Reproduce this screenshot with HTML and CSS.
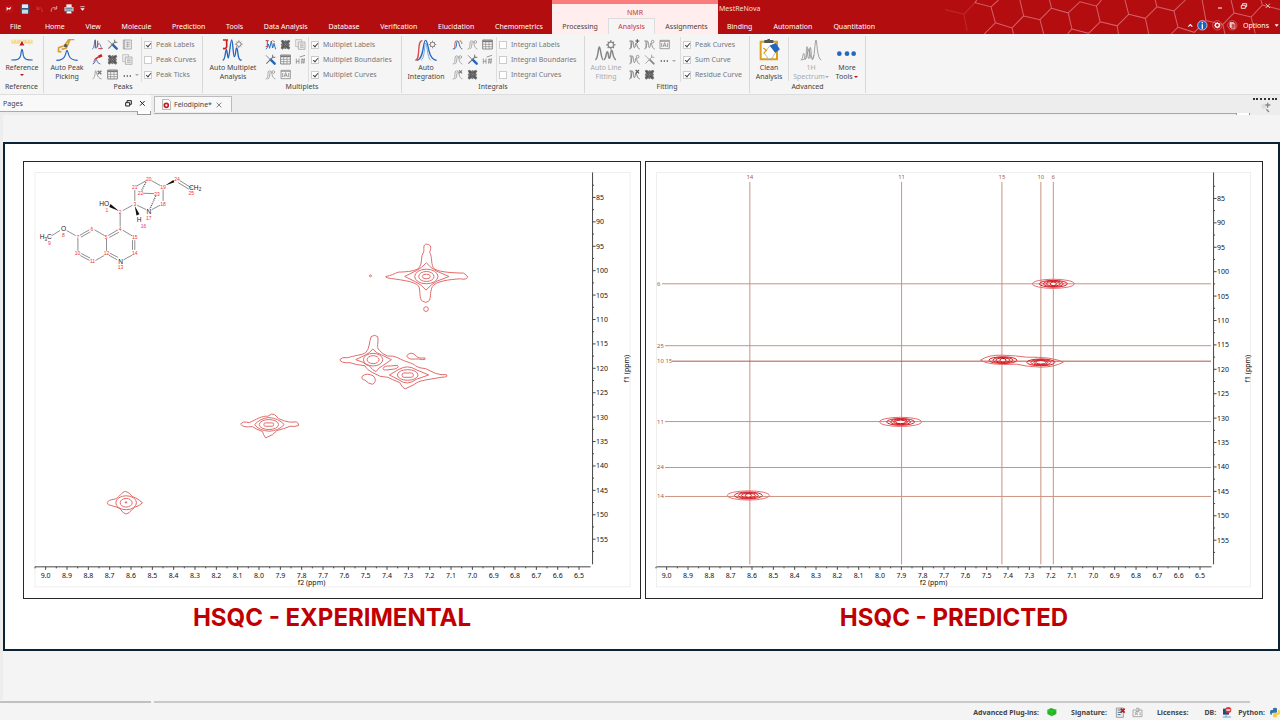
FILE: index.html
```html
<!DOCTYPE html>
<html lang="en">
<head>
<meta charset="utf-8">
<title>MestReNova</title>
<link rel="stylesheet" href="styles.css">
</head>
<body>
<svg class="defs" width="0" height="0" aria-hidden="true">
  <symbol id="tools" viewBox="0 0 33 33"><path d="M3 4L15 16" stroke="#8a8a8a" stroke-width="3"/><path d="M17 17L29 29" stroke="#1f66c1" stroke-width="7" stroke-linecap="round"/><path d="M4 29L25 8" stroke="#777" stroke-width="3.5"/><path d="M23 2v8h8" stroke="#777" stroke-width="3" fill="none"/></symbol>
  <symbol id="tools-off" viewBox="0 0 33 33"><path d="M3 4L15 16" stroke="#aaa" stroke-width="3"/><path d="M17 17L29 29" stroke="#8c8c8c" stroke-width="6" stroke-linecap="round"/><path d="M4 29L25 8" stroke="#aaa" stroke-width="3"/><path d="M23 2v8h8" stroke="#aaa" stroke-width="3" fill="none"/></symbol>
  <symbol id="splat" viewBox="0 0 33 33"><path d="M2 5l6-3 5 4 4-3 4 3 6-4 4 5-4 6 3 4-3 4 4 6-5 5-6-4-4 3-4-3-5 4-5-5 3-6-3-4 4-5z" fill="#737373"/><path d="M6 6L26 27M26 6L6 27" stroke="#5a5a5a" stroke-width="6"/><path d="M13 13l7 7M20 13l-7 7" stroke="#999" stroke-width="2"/></symbol>
  <symbol id="report" viewBox="0 0 33 33"><path d="M4 3h24v27H4zM8 3v27" fill="#f2f2f2" stroke="#999" stroke-width="2.4"/><path d="M12 10h12M12 16h12M12 22h12M17 8v18" stroke="#999" stroke-width="2"/></symbol>
  <symbol id="copy" viewBox="0 0 33 33"><path d="M2 2h18v21H2z" fill="#f0f0f0" stroke="#aaa" stroke-width="2"/><path d="M10 9h20v22H10z" fill="#eee" stroke="#999" stroke-width="2"/><path d="M15 15h11M15 20h11M15 25h11" stroke="#999" stroke-width="2"/></symbol>
  <symbol id="table" viewBox="0 0 33 33"><path d="M2 3h29v27H2z" fill="#f8f8f8" stroke="#777" stroke-width="2.6"/><path d="M2 7h29" stroke="#777" stroke-width="5"/><path d="M2 16h29M2 23h29M11 4v26M21 4v26" stroke="#888" stroke-width="2"/></symbol>
  <symbol id="dots" viewBox="0 0 33 33"><path d="M5 21h4M14 21h4M23 21h4" stroke="#555" stroke-width="4"/></symbol>
  <symbol id="pk1" viewBox="0 0 33 33" fill="none"><path d="M1 30c7-2 6-26 8-26s1 24 6 24" stroke="#2467b8" stroke-width="2.6"/><path d="M10 2v26M17 5v20M17 17l5-4" stroke="#c33" stroke-width="3"/><path d="M23 14l5 12 4 3" stroke="#3576c4" stroke-width="2.4"/><path d="M19 29h12" stroke="#c33" stroke-width="3"/></symbol>
  <symbol id="pk2" viewBox="0 0 33 33" fill="none"><path d="M2 30c8-1 7-14 10-14s3 13 13 14" stroke="#2467b8" stroke-width="2.6"/><path d="M10 15L21 8" stroke="#c33" stroke-width="5"/><path d="M20 8l10-4" stroke="#c22" stroke-width="8"/><path d="M5 25l4-12" stroke="#d66" stroke-width="3"/></symbol>
  <symbol id="pk3" viewBox="0 0 33 33" fill="none"><path d="M2 30c8-1 7-25 9-25s3 23 18 25" stroke="#999" stroke-width="2.6"/><path d="M17 5l11 11M28 5L17 16" stroke="#777" stroke-width="4"/></symbol>
  <symbol id="mu" viewBox="0 0 33 33" fill="none"><path d="M2 5h9M7 5v14q-1 5-5 4" stroke="#c33" stroke-width="3"/><path d="M3 31q5-4 7-16l4 13 5-22 4 21 4-14 5 18" stroke="#2467b8" stroke-width="2.8"/><path d="M22 4l8 5" stroke="#d66" stroke-width="3"/></symbol>
  <symbol id="sint" viewBox="0 0 33 33" fill="none"><path d="M2 30c12 0 2-25 12-25M8 30c9-1 5-24 9-24s3 22 14 24" stroke="#999" stroke-width="2.5"/><circle cx="25" cy="9" r="4" stroke="#999" stroke-width="2.5"/></symbol>
  <symbol id="sintx" viewBox="0 0 33 33" fill="none"><path d="M2 30c12 0 2-25 12-25M8 30c9-1 5-24 9-24s3 22 14 24" stroke="#999" stroke-width="2.5"/><path d="M21 4l9 9M30 4l-9 9" stroke="#777" stroke-width="3.5"/></symbol>
  <symbol id="sinta" viewBox="0 0 33 33" fill="none"><path d="M2 30c12 0 2-25 12-25" stroke="#d43a3a" stroke-width="2.6"/><path d="M6 30c10-1 6-24 11-24s4 22 14 24" stroke="#2467b8" stroke-width="3"/><path d="M23 4l6 6v5" stroke="#e29b62" stroke-width="4"/></symbol>
  <symbol id="fit" viewBox="0 0 33 33" fill="none"><path d="M1 6h9M6 6v22M1 30c9-1 6-23 10-23s1 19 5 19 2-14 5-14 2 16 11 18" stroke="#777" stroke-width="2.8"/><path d="M19 6h12M25 1v11" stroke="#555" stroke-width="3.6"/></symbol>
  <symbol id="fito" viewBox="0 0 33 33" fill="none"><path d="M1 6h9M6 6v22M1 30c9-1 6-23 10-23s1 19 5 19 2-14 5-14 2 16 11 18" stroke="#8c8c8c" stroke-width="2.8"/><circle cx="26" cy="8" r="4" stroke="#999" stroke-width="3"/></symbol>
  <symbol id="fitx" viewBox="0 0 33 33" fill="none"><path d="M1 6h9M6 6v22M1 30c9-1 6-23 10-23s1 19 5 19 2-14 5-14 2 16 11 18" stroke="#777" stroke-width="2.8"/><path d="M20 3l10 10M30 3L20 13" stroke="#555" stroke-width="3.6"/></symbol>
  <symbol id="hash" viewBox="0 0 33 33" fill="none" stroke="#999" stroke-width="3"><path d="M4 14v15M12 14v15M4 22h8M18 17h12M18 24h12M22 13l-2 16M28 13l-2 16M14 9L30 4"/></symbol>
  <symbol id="abox" viewBox="0 0 33 33" fill="none" stroke="#888" stroke-width="2.4"><path d="M3 4h28v25H3zM3 7h28M12 24l5-13 5 13M14 20h6M8 12v12M26 12v12"/></symbol>
  <symbol id="gear" viewBox="0 0 26 26" fill="none"><circle cx="13" cy="13" r="7" stroke="#858585" stroke-width="3"/><path d="M13 1v5M13 20v5M1 13h5M20 13h5M5 5l3 3M18 18l3 3M21 5l-3 3M8 18l-3 3" stroke="#858585" stroke-width="3"/></symbol>
</svg>

<header class="titlebar">
  <div class="side side-left">
    <div class="quick">
      <svg width="10" height="10" viewBox="0 0 30 30" aria-label="MestReNova"><rect x="2" y="3" width="26" height="24" rx="6" fill="#c01016"/><path d="M8 22V9l6 4 8-5-4 9-6-2z" fill="#fff"/></svg>
      <button aria-label="Save"><svg width="10" height="10" viewBox="0 0 30 30"><path d="M2 2h26v26H2z" fill="#2d5f86"/><path d="M6 1h18v11H6z" fill="#dceaf2"/><path d="M6 17h18v12H6z" fill="#c8dbe6"/></svg></button>
      <button aria-label="Undo"><svg width="8" height="8" viewBox="0 0 24 24"><path d="M3 4v9h8M4 12c7-7 16-4 14 9" fill="none" stroke="#dd3438" stroke-width="3"/></svg></button>
      <button aria-label="Redo"><svg width="8" height="8" viewBox="0 0 24 24"><path d="M20 3v9h-9M20 11C11 4 2 8 4 20" fill="none" stroke="#d8a09e" stroke-width="3"/></svg></button>
      <button aria-label="Print"><svg width="10" height="10" viewBox="0 0 30 30"><path d="M7 1h16v9H7z" fill="#e9eef2"/><path d="M1 9h28v13H1z" fill="#b5bac1"/><path d="M5 14h20M7 21h16v8H7z" fill="#fff" stroke="#435c79" stroke-width="2"/></svg></button>
      <button aria-label="Customize"><svg width="5" height="5" viewBox="0 0 15 15"><path d="M1 2h13" stroke="#fff" stroke-width="2"/><path d="M1 7h13l-6 7z" fill="#fff"/></svg></button>
    </div>
    <nav class="tabs">
      <button class="file">File</button><button>Home</button><button>View</button><button>Molecule</button><button>Prediction</button><button>Tools</button><button>Data Analysis</button><button>Database</button><button>Verification</button><button>Elucidation</button><button>Chemometrics</button>
    </nav>
  </div>
  <div class="context">
    <div class="context-name">NMR</div>
    <nav class="tabs"><button>Processing</button><button class="active">Analysis</button><button class="last">Assignments</button></nav>
  </div>
  <div class="side side-right">
    <svg class="hexes" viewBox="440 0 1000 100" fill="none" stroke="#d3616a" stroke-width="3" aria-hidden="true">
      <path d="M455 28L510 42M543 8L510 42L520 90" opacity=".35"/>
      <path d="M548 0L543 8L590 20L603 67L570 100M590 20L612 0M603 67L652 82L686 47L675 0M652 82L656 100M686 47L734 58L768 24L762 0M734 58L745 100M768 24L817 38L828 85L815 100M828 85L877 98L911 64L900 18L852 5L817 38M900 18L915 0M911 64L961 76L995 42L984 0M961 76L965 100M995 42L1044 54L1078 20L1073 0M1044 54L1054 100M1078 20L1128 32L1140 80L1120 100M1128 32L1162 0M1140 80L1188 95L1222 60L1211 0M1222 60L1272 72L1305 38L1296 0M1272 72L1278 100M1305 38L1355 50L1388 15L1384 0M1355 50L1367 98M1388 15L1440 28"/>
    </svg>
    <div class="title-row">
      <span class="app-name">MestReNova</span>
      <div class="window-buttons">
        <button aria-label="Minimize"><svg width="8" height="8" viewBox="0 0 24 24"><path d="M6 18h12" stroke="#fff" stroke-width="3"/></svg></button>
        <button aria-label="Restore"><svg width="8" height="8" viewBox="0 0 24 24"><path d="M4 10h12v9H4zM8 10V5h12v9h-4" fill="none" stroke="#fff" stroke-width="2.5"/></svg></button>
        <button aria-label="Close"><svg width="8" height="8" viewBox="0 0 24 24"><path d="M5 5l13 13M18 5L5 18" stroke="#fff" stroke-width="2"/></svg></button>
      </div>
    </div>
    <div class="right-row">
      <nav class="tabs"><button>Binding</button><button>Automation</button><button>Quantitation</button></nav>
      <div class="options">
        <button aria-label="Collapse ribbon"><svg width="5" height="5" viewBox="0 0 15 15"><path d="M1 11l6-6 6 6" fill="none" stroke="#fff" stroke-width="3.5"/></svg></button>
        <button aria-label="Information"><svg width="11" height="11" viewBox="0 0 33 33"><circle cx="16" cy="16" r="14" fill="#1765c0" stroke="#c9d9ef" stroke-width="2.5"/><path d="M16 13v13M16 6v4" stroke="#fff" stroke-width="4"/></svg></button>
        <button aria-label="Settings"><svg width="11" height="11" viewBox="0 0 33 33" fill="none"><circle cx="16" cy="16" r="14" stroke="#dc7a7c" stroke-width="2"/><circle cx="16" cy="16" r="6" stroke="#fff" stroke-width="4"/><path d="M16 7v3M16 22v3M7 16h3M22 16h3M10 10l2 2M20 20l2 2M22 10l-2 2M10 22l2-2" stroke="#fff" stroke-width="3"/></svg></button>
        <button aria-label="Layouts"><svg width="11" height="11" viewBox="0 0 33 33" fill="none"><circle cx="16" cy="16" r="14" stroke="#dc7a7c" stroke-width="2"/><path d="M9 8h11v14H9z" fill="#e9b1b2" stroke="#fff" stroke-width="2"/><path d="M13 11h11v14H13z" fill="#c34c50" stroke="#f2cccc" stroke-width="2"/></svg></button>
        <button class="options-label">Options <svg width="5" height="5" viewBox="0 0 15 15"><path d="M2 4h12l-6 7z" fill="#fff"/></svg></button>
      </div>
    </div>
  </div>
</header>

<section class="ribbon" aria-label="Analysis ribbon">
  <section class="group g-reference">
    <div class="body">
      <button class="big"><svg width="22" height="22" viewBox="0 0 66 66" fill="none"><path d="M1 2h64v12H1z" fill="#f3dc8f"/><path d="M7 2v6M17 2v6M49 2v6M59 2v6" stroke="#fff" stroke-width="2"/><path d="M23 21h19L33 2z" fill="#c81b1e" stroke="#f5f5f5" stroke-width="3"/><path d="M1 63c18 0 26-2 28-14 2-10 2-18 4-18s2 8 4 18c2 12 10 14 28 14" stroke="#2467c1" stroke-width="3.5"/></svg><span>Reference</span><i class="caret red"></i></button>
    </div><h2>Reference</h2>
  </section>
  <section class="group g-peaks">
    <div class="body">
      <button class="big"><svg width="22" height="22" viewBox="0 0 66 66" fill="none"><path d="M1 64c16 0 22-4 26-14s4-16 6-16 3 8 6 16 8 14 26 14" stroke="#2467c1" stroke-width="3.5"/><path d="M55 1H39L25 20 8 26 7 40M8 36l8 4M42 2L31 27 17 31" stroke="#d6a136" stroke-width="5"/><circle cx="29" cy="20" r="5" fill="#555"/></svg><span>Auto Peak<br>Picking</span></button>
      <div class="icons">
        <button aria-label="Peak by peak"><svg><use href="#pk1"/></svg></button><button aria-label="Edit peaks"><svg><use href="#tools"/></svg></button><button aria-label="Report peaks"><svg><use href="#report"/></svg></button>
        <button aria-label="Manual threshold"><svg><use href="#pk2"/></svg></button><button aria-label="Delete all peaks"><svg><use href="#splat"/></svg></button><button aria-label="Copy peaks"><svg><use href="#copy"/></svg></button>
        <button aria-label="Delete peak"><svg><use href="#pk3"/></svg></button><button aria-label="Peaks table"><svg><use href="#table"/></svg></button><button aria-label="More peak tools"><svg><use href="#dots"/></svg></button>
      </div>
      <i class="caret grey"></i>
      <div class="checks"><label><input type="checkbox" checked>Peak Labels</label><label><input type="checkbox">Peak Curves</label><label><input type="checkbox" checked>Peak Ticks</label></div>
    </div><h2>Peaks</h2>
  </section>
  <section class="group g-multiplets">
    <div class="body">
      <button class="big"><svg width="22" height="22" viewBox="0 0 66 66" fill="none"><path d="M3 3h15M14 3v19q-1 9-11 6" stroke="#d21d1d" stroke-width="5"/><path d="M2 64c9-2 8-33 11-33s3 26 6 26 6-54 10-54 4 50 8 50 4-26 7-26 3 15 5 24 3 12 10 13" stroke="#2467c1" stroke-width="4"/><use href="#gear" x="38" y="3" width="25" height="25"/></svg><span>Auto Multiplet<br>Analysis</span></button>
      <div class="icons">
        <button aria-label="Manual multiplet"><svg><use href="#mu"/></svg></button><button aria-label="Delete multiplets"><svg><use href="#splat"/></svg></button><button aria-label="Copy multiplets"><svg><use href="#copy"/></svg></button>
        <button aria-label="Edit multiplets"><svg><use href="#tools"/></svg></button><button aria-label="Multiplets table"><svg><use href="#table"/></svg></button><button aria-label="Nuclide count"><svg><use href="#hash"/></svg></button>
        <button aria-label="Resolve"><svg><use href="#sint"/></svg></button><button aria-label="Multiplet report"><svg><use href="#abox"/></svg></button>
      </div>
      <div class="checks"><label><input type="checkbox" checked>Multiplet Labels</label><label><input type="checkbox" checked>Multiplet Boundaries</label><label><input type="checkbox" checked>Multiplet Curves</label></div>
    </div><h2>Multiplets</h2>
  </section>
  <section class="group g-integrals">
    <div class="body">
      <button class="big"><svg width="22" height="22" viewBox="0 0 66 66" fill="none"><path d="M1 64c17-2 3-59 21-59" stroke="#df4949" stroke-width="4"/><path d="M6 64c22-4 17-60 26-60s4 56 33 60" stroke="#2467c1" stroke-width="4"/><path d="M18 64c12-5 10-52 14-52s5 45 15 52" stroke="#78a9df" stroke-width="3"/><use href="#gear" x="40" y="4" width="25" height="25"/></svg><span>Auto<br>Integration</span></button>
      <div class="icons">
        <button aria-label="Manual integration"><svg><use href="#sinta"/></svg></button><button aria-label="Integral regions"><svg><use href="#sint"/></svg></button><button aria-label="Integrals table"><svg><use href="#table"/></svg></button>
        <button aria-label="Cut integral"><svg><use href="#sint"/></svg></button><button aria-label="Edit integrals"><svg><use href="#tools"/></svg></button><button aria-label="Normalize"><svg><use href="#hash"/></svg></button>
        <button aria-label="Delete integral"><svg><use href="#sintx"/></svg></button><button aria-label="Delete all integrals"><svg><use href="#splat"/></svg></button>
      </div>
      <div class="checks"><label><input type="checkbox">Integral Labels</label><label><input type="checkbox">Integral Boundaries</label><label><input type="checkbox">Integral Curves</label></div>
    </div><h2>Integrals</h2>
  </section>
  <section class="group g-fitting">
    <div class="body">
      <button class="big off"><svg width="22" height="22" viewBox="0 0 66 66" fill="none"><path d="M1 62c9-2 8-38 12-38s5 38 12 38M27 62c7-2 6-24 10-24s2 20 6 20 3-24 7-24 3 26 13 28" stroke="#858585" stroke-width="4.5"/><use href="#gear" x="32" y="2" width="31" height="31"/></svg><span>Auto Line<br>Fitting</span></button>
      <div class="icons">
        <button aria-label="New fit"><svg><use href="#fit"/></svg></button><button aria-label="Fit region"><svg><use href="#fito"/></svg></button><button aria-label="Fit report"><svg><use href="#abox"/></svg></button>
        <button aria-label="Refit"><svg><use href="#fito"/></svg></button><button aria-label="Edit fit"><svg><use href="#tools-off"/></svg></button><button aria-label="More fitting tools"><svg><use href="#dots"/></svg></button>
        <button aria-label="Delete fit"><svg><use href="#fitx"/></svg></button><button aria-label="Delete all fits"><svg><use href="#splat"/></svg></button>
      </div>
      <i class="caret grey middle"></i>
      <div class="checks"><label><input type="checkbox" checked>Peak Curves</label><label><input type="checkbox" checked>Sum Curve</label><label><input type="checkbox" checked>Residue Curve</label></div>
    </div><h2>Fitting</h2>
  </section>
  <section class="group g-advanced">
    <div class="body">
      <button class="big ruled"><svg width="22" height="22" viewBox="0 0 66 66" fill="none"><path d="M8 8h49v53H8z" fill="#fff" stroke="#daa01c" stroke-width="6"/><path d="M19 3h27v9H19z" fill="#555"/><circle cx="32" cy="3" r="4" fill="#555"/><path d="M35 20l18-7 12 18-13 10z" fill="#2467c1"/><path d="M37 19l15 22-9 16-11 3-14-18z" fill="#fff" stroke="#999" stroke-width="2"/><path d="M35 20l18-7 12 18-13 10z" fill="#2467c1"/><path d="M16 27l11 8M17 43l8-9" stroke="#dba11c" stroke-width="4"/></svg><span>Clean<br>Analysis</span></button>
      <button class="big off"><svg width="22" height="22" viewBox="0 0 66 66" fill="none" stroke="#909090" stroke-width="2.5"><path d="M2 63c7 0 6-20 9-20s1 18 5 18 2-38 5-38 1 36 5 36 2-34 5-34 2 36 7 36 7-58 10-58 3 58 16 60M5 63l12-4 10-30 6 30M36 63l6-14"/></svg><span>1H<br>Spectrum<i class="caret grey"></i></span></button>
      <button class="big more"><svg width="22" height="22" viewBox="0 0 66 66" fill="#2467c1"><circle cx="10" cy="44" r="7"/><circle cx="33" cy="44" r="7"/><circle cx="53" cy="44" r="7"/></svg><span>More<br>Tools <i class="caret red"></i></span></button>
    </div><h2>Advanced</h2>
  </section>
</section>

<main class="workspace">
  <div class="docks">
    <div class="pages-head"><span>Pages</span><button aria-label="Float"><svg width="7" height="7" viewBox="0 0 21 21"><path d="M2 8h12v10H2zM6 8V2h13v11h-5" fill="none" stroke="#222" stroke-width="3"/></svg></button><button aria-label="Close pages"><svg width="7" height="7" viewBox="0 0 21 21"><path d="M3 3l14 14M17 3L3 17" stroke="#222" stroke-width="3"/></svg></button></div>
    <div class="documents">
      <div class="doc-tab"><svg width="9" height="11" viewBox="0 0 27 33"><path d="M2 1h17l7 7v24H2z" fill="#fff" stroke="#888" stroke-width="2"/><circle cx="13" cy="19" r="6" fill="#fff" stroke="#c51a20" stroke-width="5"/></svg><span>Felodipine*</span><button aria-label="Close document"><svg width="6" height="6" viewBox="0 0 18 18"><path d="M2 2l14 14M16 2L2 16" stroke="#666" stroke-width="2.4"/></svg></button></div>
    </div>
    <div class="zoom-tool"><i></i><svg width="11" height="13" viewBox="0 0 33 39" fill="none"><circle cx="12" cy="13" r="8" fill="#ddd"/><path d="M16 9h15M23 2v15" stroke="#888" stroke-width="4"/><path d="M19 22l8 8" stroke="#888" stroke-width="4"/></svg></div>
  </div>
  <div class="canvas">
    <article class="slide">
      <figure>
        <div class="plot"><svg viewBox="24 162 617 437" id="experimental" role="img" aria-label="Experimental HSQC spectrum">
          <g transform="translate(0 140) scale(.3333)" class="molecule">
            <path d="M156 287L180 272M200 272L227 287M240 286L268 270M243 292L271 276M284 270L314 287M325 287L354 270M328 293L357 277M234 296V333M241 347L269 362M244 341L271 355M287 362L313 347M320 297V333M327 346L352 360M330 340L355 353M371 360L397 346M398 330V301M405 330V301M397 288L369 271M361 260V222M369 212L398 196M405 183V150M411 138L439 122M455 122L482 137M490 149V183M481 196L456 209M439 209L412 196M430 160L463 161M540 122L576 144M535 128L568 148"/>
            <path d="M438 127L425 153M468 168L450 208" stroke-dasharray="3 3" stroke-width="4"/>
            <path d="M357 213L328 201l4-9zM405 198L419 223l-9 4zM496 137l25-17 3 7z" class="wedge"/>
            <g class="atoms"><text x="119" y="298">H<tspan class="sub" dy="4">3</tspan><tspan dy="-4">C</tspan></text><text x="183" y="272">O</text><text x="298" y="199">HO</text><text x="411" y="246">H</text><text x="440" y="222">N</text><text x="355" y="372">N</text><text x="568" y="150">CH<tspan class="sub" dy="4">2</tspan></text></g>
            <g class="nums"><text x="321" y="216">1</text><text x="361" y="221">2</text><text x="405" y="197">3</text><text x="361" y="272">4</text><text x="319" y="296">5</text><text x="276" y="272">6</text><text x="234" y="296">7</text><text x="190" y="291">8</text><text x="148" y="315">9</text><text x="233" y="346">10</text><text x="278" y="369">11</text><text x="320" y="346">12</text><text x="362" y="389">13</text><text x="405" y="346">14</text><text x="405" y="296">15</text><text x="431" y="263">16</text><text x="447" y="241">17</text><text x="490" y="197">18</text><text x="490" y="148">19</text><text x="447" y="123">20</text><text x="405" y="148">21</text><text x="422" y="165">22</text><text x="472" y="169">23</text><text x="532" y="123">24</text><text x="575" y="165">25</text></g>
          </g>
          <g transform="translate(320 230) scale(.3333)" class="contour">
            <circle cx="153" cy="138" r="3"/><circle cx="320" cy="238" r="7"/>
            <path d="M199 140C215 138 225 131 237 127C265 126 290 124 300 113C310 102 303 78 313 66C315 59 310 42 322 43C338 44 335 57 331 68C340 80 333 108 346 118C364 128 405 129 433 130Q444 136 445 142Q442 151 423 147C390 149 350 154 339 170C330 190 337 207 327 215Q319 221 309 214C299 208 304 182 298 169C286 153 236 150 203 144Q198 142 199 140Z"/>
            <path d="M256 140L292 122Q307 114 321 99Q334 114 350 123L389 140L353 154Q337 162 320 181Q306 164 289 156Z"/>
            <ellipse cx="321" cy="140" rx="35" ry="22"/><ellipse cx="321" cy="140" rx="23" ry="15"/><ellipse cx="321" cy="140" rx="12" ry="7"/>
            <path d="M61 390Q67 381 85 384C103 378 128 376 139 369C150 359 150 334 155 321Q165 312 175 321C178 340 170 353 179 361Q188 373 204 379Q221 377 235 384C258 398 279 398 289 409Q300 416 319 417L348 431L365 435H381Q387 440 378 442L365 443C325 451 300 451 284 465L257 478Q248 473 241 459Q215 448 205 443Q182 444 160 429C148 422 141 418 136 408Q110 406 91 399Q64 401 61 390Z"/>
            <path d="M109 390L140 375Q151 370 160 358Q171 371 185 375L216 390L190 408Q178 413 170 426Q159 422 150 409Q136 405 131 398Z"/>
            <ellipse cx="161" cy="390" rx="29" ry="19"/><ellipse cx="161" cy="390" rx="18" ry="12"/>
            <path d="M210 436L239 419Q265 404 290 420L328 436L291 449Q264 470 239 451Z"/><ellipse cx="265" cy="436" rx="31" ry="16"/><rect x="248" y="430" width="34" height="13" rx="6"/>
            <path d="M191 417Q193 408 213 409L234 407Q242 413 226 418L202 421Q192 423 191 417ZM128 440Q142 428 162 439Q175 455 159 464Q147 463 136 451Q125 450 128 440ZM262 379Q270 366 284 373Q292 382 300 385L317 385Q321 390 310 390Q298 387 288 388Q267 391 262 379Z"/>
          </g>
          <g transform="translate(90 400) scale(.3333)" class="contour">
            <path d="M453 74Q458 64 479 69C500 60 516 48 535 50Q547 39 555 45Q566 60 584 64Q599 70 620 67Q629 71 627 78Q617 82 602 80Q583 88 562 93Q552 107 528 115Q520 104 519 96Q501 90 488 81Q461 85 453 74Z"/><path d="M495 75Q512 56 538 54Q567 56 584 75Q567 94 538 95Q508 93 495 75Z"/><ellipse cx="538" cy="75" rx="29" ry="15"/><rect x="523" y="70" width="29" height="10" rx="4"/>
            <path d="M52 310Q55 301 75 299C90 294 95 276 108 276Q119 279 127 291Q139 295 148 302L158 310L148 318Q133 322 126 331Q118 343 108 344Q98 341 91 328Q79 321 66 319Q52 317 52 310Z"/><ellipse cx="109" cy="310" rx="31" ry="21"/><ellipse cx="109" cy="310" rx="18" ry="13"/><path d="M105 309h7" stroke-width="5"/>
          </g>
        </svg></div>
        <figcaption>HSQC - EXPERIMENTAL</figcaption>
      </figure>
      <figure>
        <div class="plot"><svg viewBox="647 162 617 437" id="predicted" role="img" aria-label="Predicted HSQC spectrum"></svg></div>
        <figcaption>HSQC - PREDICTED</figcaption>
      </figure>
    </article>
  </div>
  <div class="edges"><i></i><i></i></div>
</main>

<footer class="status">
  <span>Advanced Plug-ins:</span><svg width="10" height="10" viewBox="0 0 30 30"><path d="M1 9l11-6 16 5v13l-14 7-13-7z" fill="#22b525"/><path d="M1 9l13 5 14-6M14 14v14" fill="none" stroke="#38d53a" stroke-width="2"/></svg>
  <span class="signature">Signature:</span><svg width="11" height="11" viewBox="0 0 33 33"><path d="M4 3h21v28H4z" fill="#eee" stroke="#777" stroke-width="2"/><path d="M8 9h9M8 16h12M8 23h9" stroke="#467396" stroke-width="3"/><path d="M17 5l12 12M29 5L17 17" stroke="#c4161b" stroke-width="5"/></svg><svg class="id" width="11" height="11" viewBox="0 0 33 33" fill="none" stroke="#888" stroke-width="2"><path d="M3 9h27v20H3zM12 4h9v9h-9M8 24q5-7 10 0M22 18h5M22 23h5"/><circle cx="13" cy="17" r="3"/></svg>
  <span class="licenses">Licenses:</span>
  <span class="db">DB:</span><svg class="db-icon" width="10" height="11" viewBox="0 0 30 33"><path d="M3 5h18v18H3z" fill="#1b4e80"/><path d="M12 23v7M2 30h25" stroke="#6aa3ce" stroke-width="3"/><circle cx="19" cy="9" r="9" fill="#dc3436"/><path d="M13 9h12" stroke="#fff" stroke-width="4"/></svg>
  <span class="python">Python:</span><svg width="10" height="11" viewBox="0 0 30 33"><path d="M9 9V4q6-4 12 0v10q0 3-4 3h-7q-5 0-5 6H2q-4-7 0-14z" fill="#3474a8"/><path d="M24 9h4q4 7 0 14h-7v6q-6 4-12 0v-8q0-3 4-3h8q4 0 3-9z" fill="#f7cf44"/></svg>
</footer>
<script src="script.js"></script>
</body>
</html>
```

FILE: styles.css
```css
* { box-sizing: border-box; }
body {
  margin: 0;
  min-height: 100vh;
  display: flex;
  flex-direction: column;
  overflow-x: hidden;
  background: #f4f4f4;
  color: #444;
  font: 7px/9px "Noto Sans", "Open Sans", sans-serif;
}
button {
  margin: 0;
  padding: 0;
  border: 0;
  background: none;
  color: inherit;
  font: inherit;
  display: flex;
  align-items: center;
  justify-content: center;
}
svg { display: block; flex: none; }
.defs { position: absolute; }

/* Title bar and tabs */
.titlebar { display: flex; height: 34px; background: #b30d10; color: #fff; }
.side { display: flex; flex-direction: column; justify-content: space-between; }
.side-left { width: 552px; flex: none; }
.side-right { flex: 1; position: relative; }
.quick { display: flex; align-items: center; gap: 6px; height: 17px; padding-left: 4px; }
.tabs { display: flex; height: 15px; }
.side-left .tabs { justify-content: space-between; padding: 0 9px 0 10px; }
.side-left .file { margin-right: 3px; }
.context { width: 166px; flex: none; display: flex; flex-direction: column; justify-content: space-between; border-top: 4px solid #fb7c7c; background: #ffeeed; color: #444; }
.context-name { padding-top: 5px; text-align: center; line-height: 8px; color: #c8393b; }
.context .tabs { height: 16px; }
.context .tabs button { flex: 0 0 56px; }
.context .tabs .active { flex: 0 0 47px; border: 1px solid #ddd; border-bottom: 0; background: #f5f5f5; color: #cf2f2f; }
.context .tabs .last { flex: 1; }
.hexes { position: absolute; right: 0; top: 0; height: 34px; }
.title-row, .right-row { position: relative; display: flex; justify-content: space-between; align-items: flex-end; }
.title-row { height: 17px; align-items: center; }
.app-name { padding-left: 1px; color: #f8dede; }
.window-buttons { display: flex; align-items: flex-start; height: 14px; gap: 16px; padding-right: 8px; }
.right-row .tabs { gap: 21px; padding-left: 9px; }
.options { display: flex; align-items: center; gap: 4px; height: 17px; padding-right: 1px; }
.options-label { gap: 5px; margin-left: 1px; }

/* Ribbon */
.ribbon { display: flex; height: 61px; padding-top: 2px; background: #f5f5f5; border-bottom: 1px solid #ddd; }
.group { display: flex; flex-direction: column; height: 57px; border-right: 1px solid #d8d8d8; }
.group h2 { margin: 0; font: inherit; text-align: center; }
.body { display: flex; height: 46px; padding-top: 1px; }
.g-reference { width: 44px; }
.g-peaks { width: 159px; }
.g-multiplets { width: 199px; }
.g-integrals { width: 183px; }
.g-fitting { width: 165px; }
.g-advanced { width: 116px; }
.big { flex: none; width: 46px; flex-direction: column; justify-content: flex-start; gap: 2px; padding-top: 2px; }
.g-reference .big { width: 44px; }
.g-multiplets .big { width: 60px; }
.g-integrals .big { width: 48px; }
.g-fitting .big { width: 42px; }
.g-advanced .big { width: 39px; height: 44px; }
.g-advanced .big.off { width: 44px; }
.g-advanced .big.more { width: 28px; }
.ruled { border-right: 1px solid #ddd; }
.off { color: #aaa; }
.icons { display: grid; grid-template-columns: repeat(3, 15px); grid-auto-rows: 15px; align-content: start; }
.icons svg { width: 11px; height: 11px; }
.caret { display: inline-block; border: 2px solid transparent; border-bottom: 0; vertical-align: middle; }
.caret.red { border-top-color: #b01216; }
.caret.grey { border-top-color: #aaa; }
.body > .caret { width: 4px; height: 2px; margin: 37px 0 0; flex: none; }
.body > .caret.middle { margin-top: 23px; }
.checks { display: flex; flex-direction: column; height: 45px; margin-left: auto; padding-left: 2px; border-left: 1px solid #ddd; color: #777; }
.g-peaks .checks { width: 61px; }
.g-multiplets .checks { width: 93px; }
.g-integrals .checks { width: 88px; }
.g-fitting .checks { width: 69px; }
.checks label { display: flex; align-items: center; gap: 4px; height: 15px; white-space: nowrap; }
.checks input { appearance: none; width: 8px; height: 8px; margin: 0; border: 1px solid #ccc; background: #fff; display: grid; place-items: center; }
.checks input:checked::after { content: ""; width: 2px; height: 4px; border: solid #444; border-width: 0 1px 1px 0; rotate: 40deg; }

/* Workspace */
.workspace { flex: 1; display: flex; flex-direction: column; background: #ededed; }
.docks { display: flex; height: 20px; }
.pages-head { position: relative; display: flex; align-items: center; gap: 7px; width: 151px; height: 17px; padding: 0 5px 0 3px; background: #f9f9f9; border-bottom: 1px solid #aaa; }
.pages-head span { flex: 1; }
.pages-head::after, .documents::after { content: ""; position: absolute; right: 0; top: 100%; width: 12px; height: 3px; border: 1px solid #999; border-width: 0 1px 1px; background: #fff; }
.documents { position: relative; flex: 1; display: flex; height: 19px; margin: 0 0 0 3px; border-bottom: 1px solid #aaa; }
.documents::after { height: 2px; border-bottom: 0; }
.doc-tab { display: flex; align-items: center; gap: 4px; width: 78px; height: 16px; padding-left: 7px; margin-top: 1px; border: 1px solid #bbb; border-bottom: 0; background: #f8f8f8; }
.doc-tab svg + span { margin-left: -1px; }
.zoom-tool { width: 30px; display: flex; flex-direction: column; align-items: center; gap: 2px; padding-top: 3px; }
.zoom-tool i { width: 24px; border-top: 2px dotted #333; }
.canvas { flex: 1; margin-left: 3px; padding: 27px 0 49px; background: #f4f4f4; }
.slide { display: flex; gap: 4px; padding: 17px 15px 13px 18px; border: 2px solid #0b2336; background: #fff; }
figure { flex: 1; min-width: 0; margin: 0; }
.plot { border: 1px solid #26282b; }
.plot svg { width: 100%; height: auto; }
figcaption { text-align: center; font: 700 24px/37px Inter, "Noto Sans", sans-serif; color: #c00000; }
.edges { display: flex; gap: 3px; height: 4px; padding-top: 1px; background: #f4f4f4; }
.edges i { width: 151px; height: 2px; background: #bfc0c3; }
.edges i + i { width: auto; flex: 1; margin-right: 30px; background: #c9c9cc; }

/* Spectra */
.molecule { fill: none; stroke: #555; stroke-width: 2; }
.molecule .wedge { fill: #111; stroke: none; }
.molecule text { stroke: none; font-family: "Liberation Sans", sans-serif; }
.atoms { fill: #222; font-size: 20px; }
.atoms .sub { font-size: 14px; }
.nums { fill: #f03030; font-size: 15px; text-anchor: middle; }
.contour { fill: none; stroke: #e06b6b; stroke-width: 3; }
.frame { fill: none; stroke: #eee; }
.axis { fill: none; stroke: #444; }
.axis-text { fill: #111; font-size: 7px; }
.middle-text { text-anchor: middle; }
.guide { stroke: #c9937f; }
.guide.strong { stroke: #b0583f; }
.guide-text { fill: #a9583d; font-size: 6px; }
.peak ellipse { fill: none; stroke: #d81f26; }
.peak .outer { stroke: #e56d70; }
.peak .core { fill: #fff; stroke: #c80d14; }

/* Status bar */
.status { display: flex; align-items: center; justify-content: flex-end; height: 16px; font-weight: 700; }
.status span { margin-right: 8px; }
.status .signature { margin-left: 14px; }
.status .id { margin-left: 6px; }
.status .licenses { margin: 0 16px 0 14px; }
.status .db { margin-right: 6px; }
.status .db-icon { margin-right: 6px; }
.status .python { margin-right: 5px; }
```

FILE: script.js
```js
const NS = "http://www.w3.org/2000/svg";

function add(parent, tag, attrs, text) {
  const node = document.createElementNS(NS, tag);
  for (const key in attrs) node.setAttribute(key, attrs[key]);
  if (text !== undefined) node.textContent = text;
  parent.appendChild(node);
  return node;
}

// Draws the frame, the f2 axis below and the f1 axis on the right.
function drawAxes(svg, o) {
  add(svg, "rect", { class: "frame", x: o.left, y: 172.5, width: o.frame, height: 415 });
  const fx = ppm => o.x9 + (9 - ppm) * 213.7;
  const fy = ppm => o.y85 + (ppm - 85) * 4.89;
  let d = `M${o.left} 567.5H${o.axis - 2}M${o.axis} 172.5V565`;
  for (let i = 0; i <= 25; i++) {
    const ppm = 9 - i / 10;
    d += `M${fx(ppm)} 567.5v3M${fx(ppm) - 10.7} 567.5v1.5`;
    add(svg, "text", { class: "axis-text middle-text", x: fx(ppm), y: 578.5 }, ppm.toFixed(1));
  }
  for (let ppm = 80; ppm <= 155; ppm += 5) {
    if (ppm > 80) {
      d += `M${o.axis} ${fy(ppm)}h3`;
      add(svg, "text", { class: "axis-text", x: o.axis + 3.5, y: fy(ppm) + 2.5 }, ppm);
    }
    d += `M${o.axis} ${fy(ppm + 2.5)}h1.5`;
  }
  add(svg, "path", { class: "axis", d });
  add(svg, "text", { class: "axis-text middle-text", x: o.f2, y: 586 }, "f2 (ppm)");
  add(svg, "text", { class: "axis-text middle-text", transform: `translate(${o.axis + 36} 369) rotate(-90)` }, "f1 (ppm)");
}

drawAxes(document.getElementById("experimental"), { left: 35, frame: 596, x9: 45.7, y85: 197.5, axis: 593.5, f2: 312 });

const predicted = document.getElementById("predicted");
drawAxes(predicted, { left: 657.5, frame: 595, x9: 667.7, y85: 198.5, axis: 1215.5, f2: 935 });

[[751, "14"], [903, "11"], [1003.5, "15"], [1042.5, "10"], [1055, "6"]].forEach(([x, label]) => {
  add(predicted, "path", { class: "guide", d: `M${x} 182V565` });
  add(predicted, "text", { class: "guide-text middle-text", x, y: 179.5 }, label);
});
[[284, "6", 663], [346, "25", 666], [361.5, "10 15", 673], [422, "11", 666], [468, "24", 666], [497, "14", 666]].forEach(([y, label, start]) => {
  add(predicted, "path", { class: start === 673 ? "guide strong" : "guide", d: `M${start} ${y}H1213` });
  add(predicted, "text", { class: "guide-text", x: 658, y: y + 2 }, label);
});

// Nested contour levels of each predicted peak: half width, half height.
const levels = [[14, 3.4], [10, 2.8], [7, 2.2]];
[[1055, 284], [1004.5, 360.5], [1042.5, 362.7], [902, 422.3], [749.5, 496]].forEach(([x, y], i) => {
  const g = add(predicted, "g", { class: "peak" });
  if (i !== 1 && i !== 2) add(g, "ellipse", { class: "outer", cx: x, cy: y, rx: 21, ry: 4.6 });
  levels.forEach(([rx, ry]) => add(g, "ellipse", { cx: x, cy: y, rx, ry }));
  add(g, "ellipse", { class: "core", cx: x, cy: y, rx: i === 2 || i === 3 ? 5 : 3, ry: 1.8 });
});
add(predicted, "path", { class: "contour", style: "stroke-width:1", d: "M982 360.5Q990 355 1004 355.5Q1018 356 1028 357.5Q1054 357 1065 362.5Q1056 367.5 1042 367.5Q1028 367 1018 364.5Q990 366 982 360.5Z" });
```
